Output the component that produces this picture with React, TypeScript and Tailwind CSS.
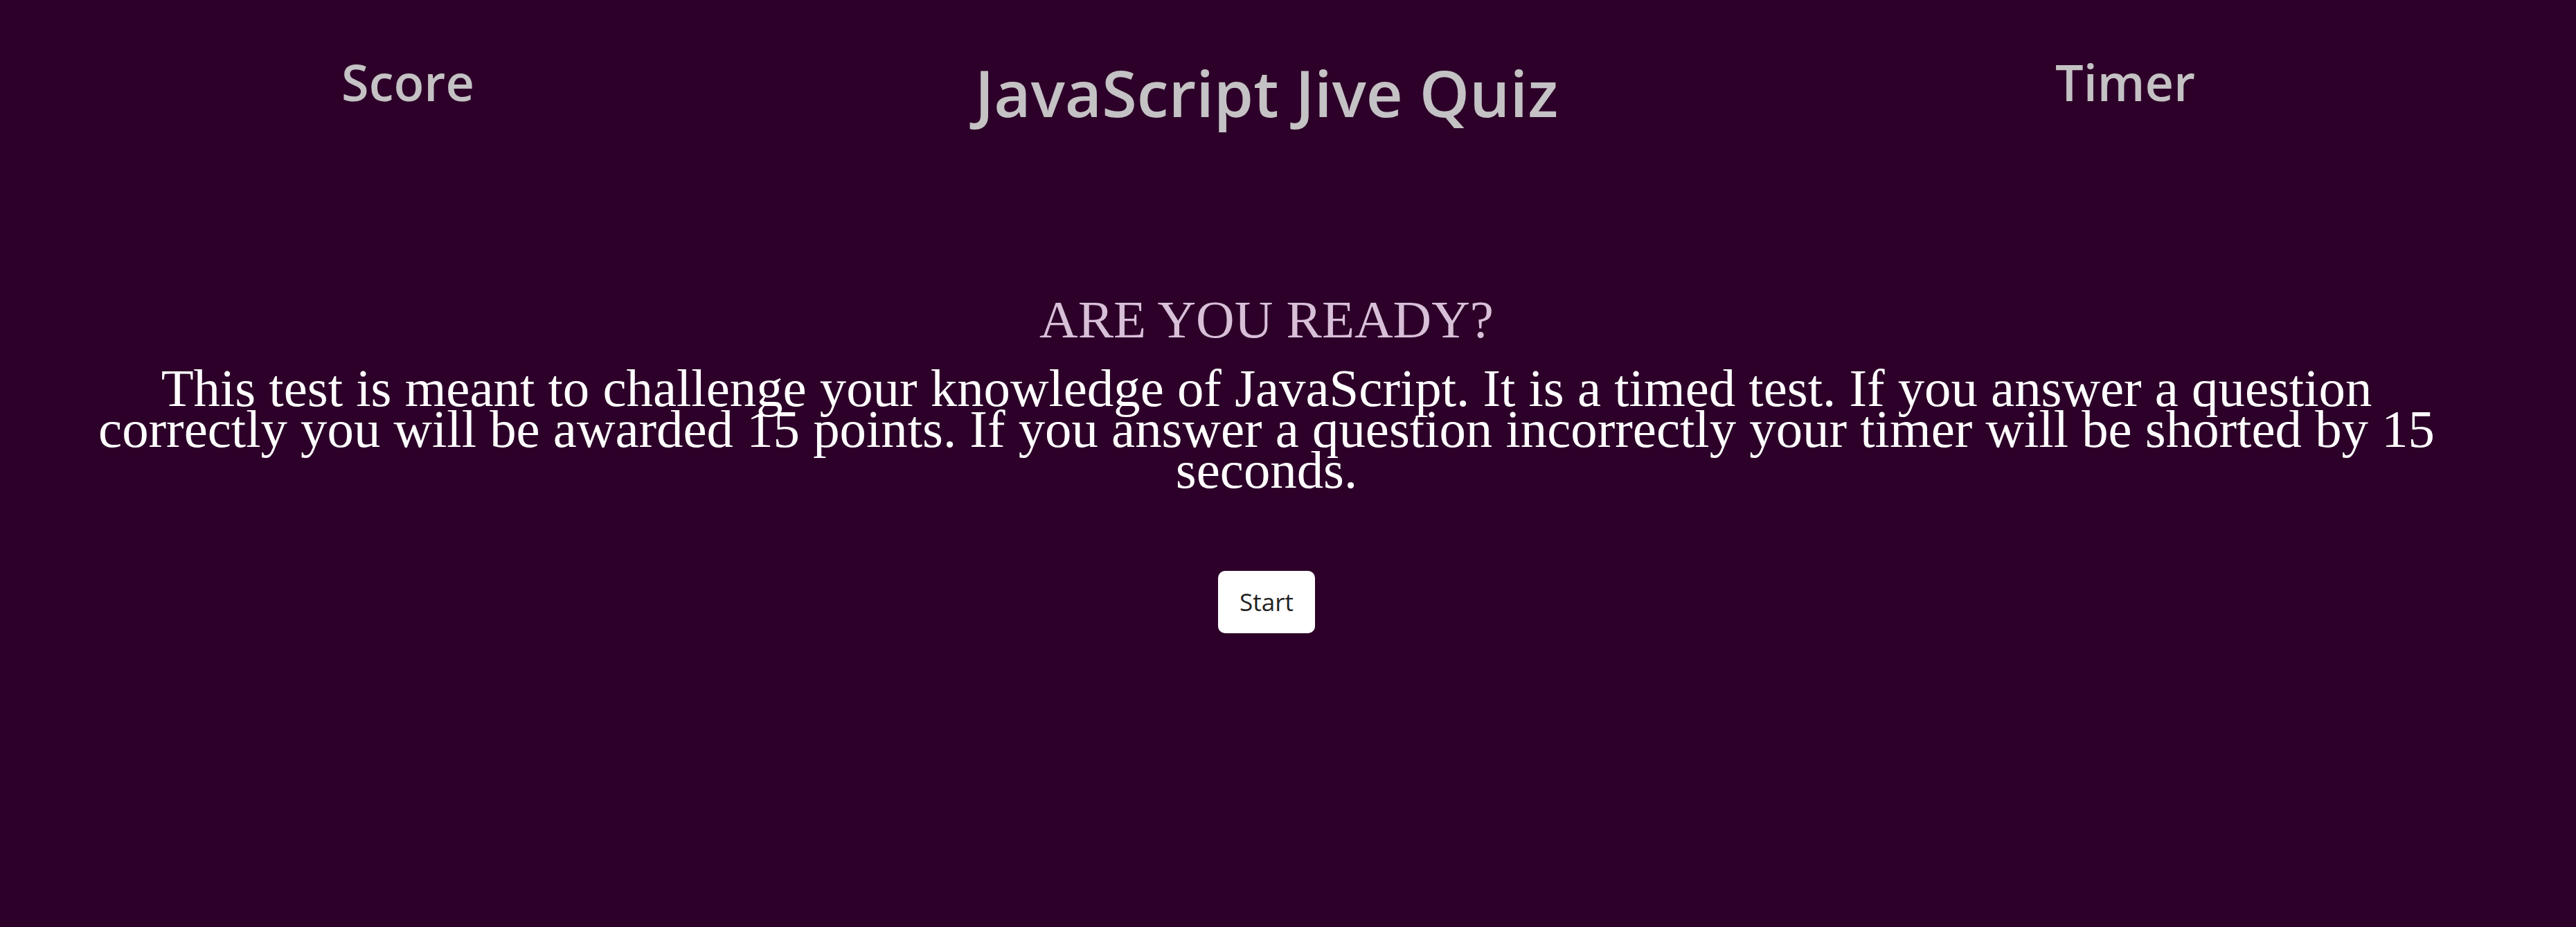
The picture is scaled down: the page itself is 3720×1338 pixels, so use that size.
export default function App() {
  return (
    <div className="min-h-screen bg-[#2d0029] pr-[62px]">
      {/* Top bar */}
      <header
        className="grid grid-cols-[repeat(3,1240px)] justify-center pt-[82px] text-center text-[#c4c2c4] font-semibold"
        style={{ fontFamily: '"Open Sans", "Noto Sans", sans-serif' }}
      >
        <h2 className="text-[72px] leading-none">Score</h2>
        <h1 className="pt-[6px] text-[92px] leading-none">JavaScript Jive Quiz</h1>
        <h2 className="text-[72px] leading-none">Timer</h2>
      </header>

      {/* Intro */}
      <main
        className="mt-[243px] flex flex-col items-center text-center"
        style={{ fontFamily: '"Liberation Serif", "Times New Roman", serif' }}
      >
        <h3 className="text-[77px] leading-none font-normal text-[#d8bfd8]">ARE YOU READY?</h3>
        <p className="mt-[31px] w-[3440px] text-[76.8px] leading-[59px] text-white">
          This test is meant to challenge your knowledge of JavaScript. It is a timed test. If you answer a question
          correctly you will be awarded 15 points. If you answer a question incorrectly your timer will be shorted by 15
          seconds.
        </p>
        <button
          className="mt-[116px] flex h-[90px] w-[140px] items-center justify-center rounded-[10px] bg-white text-[35px] text-[#222]"
          style={{ fontFamily: '"Open Sans", "Noto Sans", sans-serif' }}
        >
          Start
        </button>
      </main>
    </div>
  );
}
